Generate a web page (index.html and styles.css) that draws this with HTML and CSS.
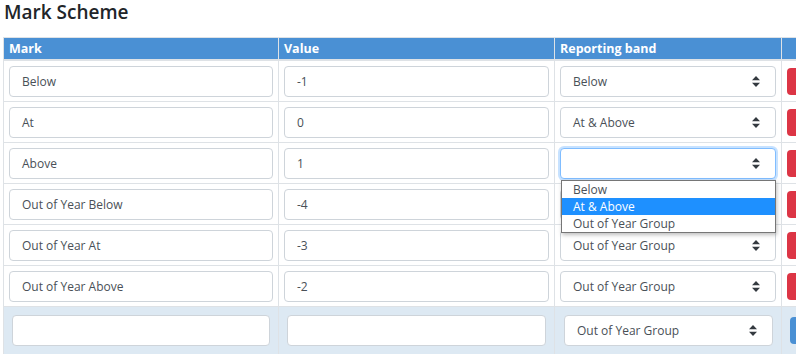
FILE: index.html
```html
<!DOCTYPE html>
<html lang="en">
<head>
<meta charset="utf-8">
<title>Mark Scheme</title>
<link rel="stylesheet" href="styles.css">
</head>
<body>
<h1 class="title">Mark Scheme</h1>
<table class="scheme">
  <colgroup>
    <col class="c-mark"><col class="c-value"><col class="c-band"><col class="c-act">
  </colgroup>
  <thead>
    <tr><th>Mark</th><th>Value</th><th>Reporting band</th><th></th></tr>
  </thead>
  <tbody>
    <tr>
      <td><div class="field">Below</div></td>
      <td><div class="field">-1</div></td>
      <td><div class="field select"><span>Below</span><svg class="caret" width="8" height="11" viewBox="0 0 8 11"><path d="M4 0L8 4.3H0Z M4 11L0 6.7H8Z" fill="#343a40"/></svg></div></td>
      <td><div class="btn danger"></div></td>
    </tr>
    <tr>
      <td><div class="field">At</div></td>
      <td><div class="field">0</div></td>
      <td><div class="field select"><span>At &amp; Above</span><svg class="caret" width="8" height="11" viewBox="0 0 8 11"><path d="M4 0L8 4.3H0Z M4 11L0 6.7H8Z" fill="#343a40"/></svg></div></td>
      <td><div class="btn danger"></div></td>
    </tr>
    <tr>
      <td><div class="field">Above</div></td>
      <td><div class="field">1</div></td>
      <td class="has-menu">
        <div class="field select focus"><span></span><svg class="caret" width="8" height="11" viewBox="0 0 8 11"><path d="M4 0L8 4.3H0Z M4 11L0 6.7H8Z" fill="#343a40"/></svg></div>
        <ul class="menu">
          <li>Below</li>
          <li class="active">At &amp; Above</li>
          <li>Out of Year Group</li>
        </ul>
      </td>
      <td><div class="btn danger"></div></td>
    </tr>
    <tr>
      <td><div class="field">Out of Year Below</div></td>
      <td><div class="field">-4</div></td>
      <td><div class="field select"><span>Out of Year Group</span><svg class="caret" width="8" height="11" viewBox="0 0 8 11"><path d="M4 0L8 4.3H0Z M4 11L0 6.7H8Z" fill="#343a40"/></svg></div></td>
      <td><div class="btn danger"></div></td>
    </tr>
    <tr>
      <td><div class="field">Out of Year At</div></td>
      <td><div class="field">-3</div></td>
      <td><div class="field select"><span>Out of Year Group</span><svg class="caret" width="8" height="11" viewBox="0 0 8 11"><path d="M4 0L8 4.3H0Z M4 11L0 6.7H8Z" fill="#343a40"/></svg></div></td>
      <td><div class="btn danger"></div></td>
    </tr>
    <tr>
      <td><div class="field">Out of Year Above</div></td>
      <td><div class="field">-2</div></td>
      <td><div class="field select"><span>Out of Year Group</span><svg class="caret" width="8" height="11" viewBox="0 0 8 11"><path d="M4 0L8 4.3H0Z M4 11L0 6.7H8Z" fill="#343a40"/></svg></div></td>
      <td><div class="btn danger"></div></td>
    </tr>
    <tr class="new-row">
      <td><div class="field"></div></td>
      <td><div class="field"></div></td>
      <td><div class="field select"><span>Out of Year Group</span><svg class="caret" width="8" height="11" viewBox="0 0 8 11"><path d="M4 0L8 4.3H0Z M4 11L0 6.7H8Z" fill="#343a40"/></svg></div></td>
      <td><div class="btn primary"></div></td>
    </tr>
  </tbody>
</table>
</body>
</html>
```

FILE: styles.css
```css
html, body {
  margin: 0;
  overflow: hidden;
}
body {
  padding: 0 3px;
  font-family: "Open Sans", "Noto Sans", sans-serif;
  color: #212529;
  width: 900px;
}
.title {
  margin: 0 0 13px 1px;
  font-size: 19px;
  font-weight: 600;
  line-height: 24px;
  color: #212529;
}
.scheme {
  border-collapse: collapse;
  table-layout: fixed;
  width: 838px;
}
.c-mark { width: 275px; }
.c-value { width: 276px; }
.c-band { width: 227px; }
.c-act { width: 60px; }
.scheme th, .scheme td {
  border: 1px solid #dee2e6;
  vertical-align: middle;
}
.scheme th {
  background: #4a90d4;
  color: #fff;
  font-size: 12.5px;
  font-weight: 700;
  text-align: left;
  padding: 2px 5px 2px 5px;
  line-height: 17px;
  border-bottom: 2px solid #dee2e6;
}
.scheme td {
  padding: 5px 5px 4px 5px;
}
.field {
  box-sizing: border-box;
  height: 31px;
  border: 1px solid #ced4da;
  border-radius: 4px;
  background: #fff;
  padding: 0 12px;
  font-size: 12px;
  line-height: 29px;
  color: #495057;
  white-space: nowrap;
}
.select {
  display: flex;
  align-items: center;
  justify-content: space-between;
  padding: 0 15px 0 12px;
}
.select .caret { flex: none; }
.focus {
  border-color: #80bdff;
  box-shadow: 0 0 0 2px rgba(0, 123, 255, 0.22);
}
.has-menu { position: relative; }
.menu {
  position: absolute;
  left: 6px;
  top: 37px;
  width: 213px;
  margin: 0;
  padding: 0;
  list-style: none;
  background: #fff;
  border: 1px solid #767676;
  box-shadow: 1px 2px 4px rgba(0, 0, 0, 0.25);
  z-index: 2;
}
.menu li {
  font-size: 12px;
  line-height: 17px;
  padding: 0 11px;
  color: #495057;
}
.menu li.active {
  background: #1e90ff;
  color: #fff;
}
.btn {
  width: 40px;
  height: 27px;
  border-radius: 4px;
}
.danger { background: #dc3545; }
.primary { background: #4a90d4; }
.new-row td {
  background: #dde9f3;
  padding: 8px 8px 8px 8px;
}
.new-row .select { margin-left: 1px; }
```
